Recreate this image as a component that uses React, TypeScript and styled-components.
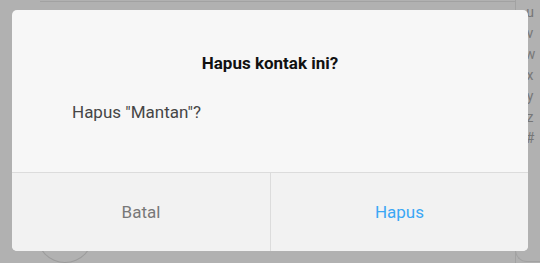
import styled, { createGlobalStyle } from 'styled-components';

const GlobalStyle = createGlobalStyle`
  html, body {
    margin: 0;
    padding: 0;
    background: #b1b1b1;
    font-family: Roboto, "Noto Sans", "Liberation Sans", sans-serif;
  }
`;

const Screen = styled.div`
  position: relative;
  width: 540px;
  height: 263px;
  overflow: hidden;
  background: #b1b1b1;
`;

const ListArea = styled.div`
  display: flex;
  height: 100%;
`;

const ListColumn = styled.div`
  flex: 0 0 475px;
  margin-left: 40px;
  position: relative;
  border-top: 1px solid #a2a2a2;
  border-right: 1px solid #a2a2a2;
  margin-top: 1px;
`;

const Avatar = styled.div`
  position: absolute;
  left: -4px;
  top: 201px;
  width: 56px;
  height: 58px;
  border-radius: 50%;
  border: 1px solid #9c9c9c;
`;

const IndexBar = styled.div`
  flex: 1;
  position: relative;
  border-left: 1px solid #a2a2a2;
  border-bottom: 1px solid #a2a2a2;
  border-bottom-left-radius: 12px;
  margin: 0 0 1px -1px;
  display: flex;
  flex-direction: column;
  align-items: center;
  padding-top: 4px;
  gap: 5px;
`;

const IndexLetter = styled.span`
  font-size: 14px;
  line-height: 16px;
  color: #777;
  transform: translateX(2px);
`;

const Dialog = styled.div`
  position: absolute;
  left: 12px;
  top: 10px;
  width: 516px;
  height: 241px;
  border-radius: 5px;
  overflow: hidden;
  background: #f7f7f7;
  display: flex;
  flex-direction: column;
`;

const Body = styled.div`
  height: 162px;
  box-sizing: border-box;
  padding-top: 43px;
`;

const Title = styled.div`
  font-size: 17px;
  line-height: 20px;
  font-weight: 700;
  color: #111;
  text-align: center;
`;

const Message = styled.div`
  margin-top: 29px;
  padding-left: 60px;
  font-size: 17px;
  line-height: 20px;
  color: #464646;
`;

const Footer = styled.div`
  flex: 1;
  display: grid;
  grid-template-columns: 258px 1fr;
  border-top: 1px solid #dcdcdc;
  background: #f2f2f2;
`;

const Action = styled.button<{ $primary?: boolean }>`
  border: none;
  border-left: ${(p) => (p.$primary ? '1px solid #dcdcdc' : 'none')};
  background: transparent;
  font-family: inherit;
  font-size: 17px;
  line-height: 20px;
  color: ${(p) => (p.$primary ? '#3ba7f5' : '#787878')};
  display: flex;
  align-items: center;
  justify-content: center;
  padding: 0;
  cursor: pointer;
`;

const letters = ['u', 'v', 'w', 'x', 'y', 'z', '#'];

export default function App() {
  return (
    <>
      <GlobalStyle />
      <Screen>
        <ListArea>
          <ListColumn>
            <Avatar />
          </ListColumn>
          <IndexBar>
            {letters.map((l) => (
              <IndexLetter key={l}>{l}</IndexLetter>
            ))}
          </IndexBar>
        </ListArea>

        <Dialog>
          <Body>
            <Title>Hapus kontak ini?</Title>
            <Message>Hapus "Mantan"?</Message>
          </Body>
          <Footer>
            <Action type="button">Batal</Action>
            <Action type="button" $primary>
              Hapus
            </Action>
          </Footer>
        </Dialog>
      </Screen>
    </>
  );
}
